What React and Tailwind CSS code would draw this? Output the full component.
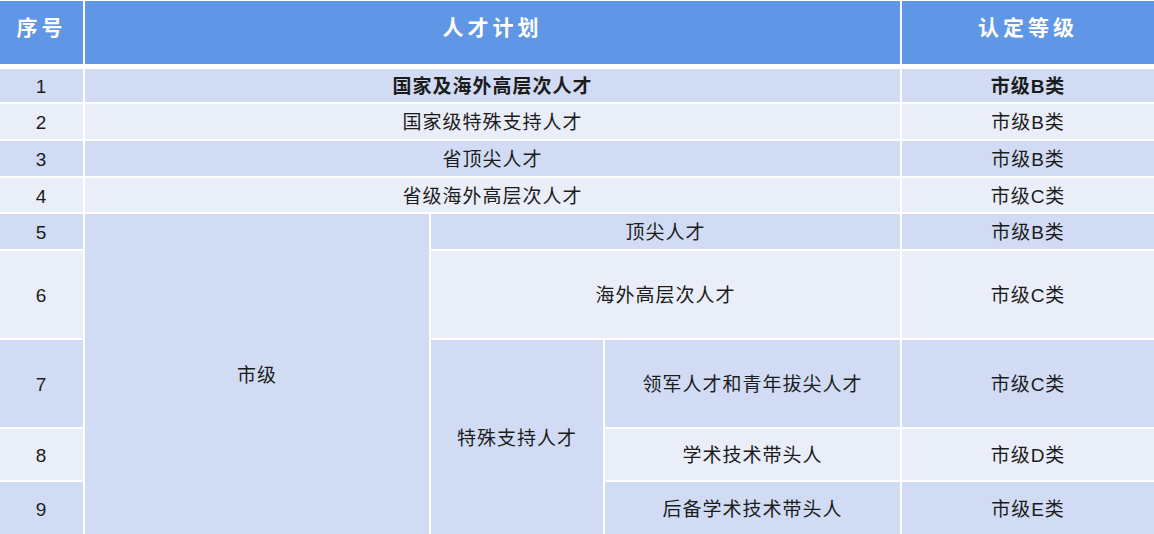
const dark = "bg-[#d1dcf4]";
const light = "bg-[#e9eef9]";

const cellBase = "flex items-center justify-center pt-[4px] text-[19px] tracking-[1px] text-[#1c1c1c]";
const headBase =
  "flex items-center justify-center mb-[3px] pb-[10px] bg-[#5f96e5] text-white text-[21px] font-bold tracking-[4px]";

const rows = [
  { no: "1", name: "国家及海外高层次人才", grade: "市级B类", bg: dark, bold: true, row: "row-start-2" },
  { no: "2", name: "国家级特殊支持人才", grade: "市级B类", bg: light, row: "row-start-3" },
  { no: "3", name: "省顶尖人才", grade: "市级B类", bg: dark, row: "row-start-4" },
  { no: "4", name: "省级海外高层次人才", grade: "市级C类", bg: light, row: "row-start-5" },
];

const cityRows = [
  { no: "5", grade: "市级B类", bg: dark, row: "row-start-6" },
  { no: "6", grade: "市级C类", bg: light, row: "row-start-7" },
  { no: "7", grade: "市级C类", bg: dark, row: "row-start-8" },
  { no: "8", grade: "市级D类", bg: light, row: "row-start-9" },
  { no: "9", grade: "市级E类", bg: dark, row: "row-start-10" },
];

export default function App() {
  return (
    <div
      className="w-[1154px] h-[534px] overflow-hidden bg-white pt-[1px]"
      style={{ fontFamily: '"Liberation Sans", "Noto Sans CJK SC", sans-serif' }}
    >
      <div className="grid grid-cols-[83px_344px_172px_295px_252px] grid-rows-[66px_33px_35px_35px_34px_35px_87px_87px_51px_52px] gap-[2px]">
        <div className={`${headBase} col-start-1 row-start-1`}>序号</div>
        <div className={`${headBase} col-start-2 col-span-3 row-start-1`}>人才计划</div>
        <div className={`${headBase} col-start-5 row-start-1`}>认定等级</div>

        {rows.map((r) => (
          <div key={r.no} className="contents">
            <div className={`${cellBase} ${r.bg} ${r.row} col-start-1`}>{r.no}</div>
            <div className={`${cellBase} ${r.bg} ${r.row} col-start-2 col-span-3 ${r.bold ? "font-bold" : ""}`}>
              {r.name}
            </div>
            <div className={`${cellBase} ${r.bg} ${r.row} col-start-5 ${r.bold ? "font-bold" : ""}`}>{r.grade}</div>
          </div>
        ))}

        {cityRows.map((r) => (
          <div key={r.no} className="contents">
            <div className={`${cellBase} ${r.bg} ${r.row} col-start-1`}>{r.no}</div>
            <div className={`${cellBase} ${r.bg} ${r.row} col-start-5`}>{r.grade}</div>
          </div>
        ))}

        <div className={`${cellBase} ${dark} col-start-2 row-start-6 row-span-5`}>市级</div>
        <div className={`${cellBase} ${dark} col-start-3 col-span-2 row-start-6`}>顶尖人才</div>
        <div className={`${cellBase} ${light} col-start-3 col-span-2 row-start-7`}>海外高层次人才</div>
        <div className={`${cellBase} ${dark} col-start-3 row-start-8 row-span-3`}>特殊支持人才</div>
        <div className={`${cellBase} ${dark} col-start-4 row-start-8`}>领军人才和青年拔尖人才</div>
        <div className={`${cellBase} ${light} col-start-4 row-start-9`}>学术技术带头人</div>
        <div className={`${cellBase} ${dark} col-start-4 row-start-10`}>后备学术技术带头人</div>
      </div>
    </div>
  );
}
